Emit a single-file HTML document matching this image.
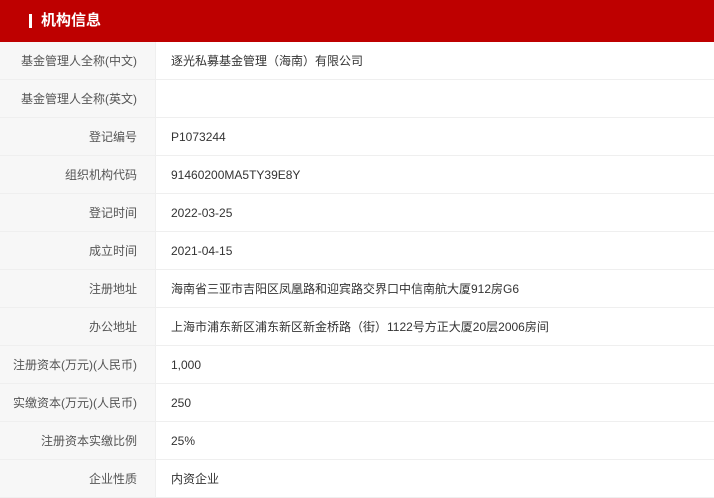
<!DOCTYPE html>
<html><head><meta charset="utf-8"><style>
body{margin:0;width:714px;height:497px;overflow:hidden;background:#fff;font-family:"Liberation Sans","Noto Sans CJK SC",sans-serif;}
.h{height:42px;background:#be0000;color:#fff;font-size:15px;font-weight:bold;line-height:42px;padding-left:29px;position:relative;box-sizing:border-box}
.h:before{content:"";position:absolute;left:29px;top:14px;width:3px;height:14px;background:#fff}
.h span{margin-left:12px}
table{border-collapse:collapse;width:714px}
td{height:37px;border-bottom:1px solid #efefef;font-size:12px;padding:0}
td.l{width:137px;padding-right:18px;text-align:right;background:#f7f7f7;color:#555;border-right:1px solid #efefef}
td.v{padding-left:15px;color:#333}
</style></head><body>
<div class="h"><span>机构信息</span></div>
<table>
<tr><td class="l">基金管理人全称(中文)</td><td class="v">逐光私募基金管理（海南）有限公司</td></tr>
<tr><td class="l">基金管理人全称(英文)</td><td class="v"></td></tr>
<tr><td class="l">登记编号</td><td class="v">P1073244</td></tr>
<tr><td class="l">组织机构代码</td><td class="v">91460200MA5TY39E8Y</td></tr>
<tr><td class="l">登记时间</td><td class="v">2022-03-25</td></tr>
<tr><td class="l">成立时间</td><td class="v">2021-04-15</td></tr>
<tr><td class="l">注册地址</td><td class="v">海南省三亚市吉阳区凤凰路和迎宾路交界口中信南航大厦912房G6</td></tr>
<tr><td class="l">办公地址</td><td class="v">上海市浦东新区浦东新区新金桥路（街）1122号方正大厦20层2006房间</td></tr>
<tr><td class="l">注册资本(万元)(人民币)</td><td class="v">1,000</td></tr>
<tr><td class="l">实缴资本(万元)(人民币)</td><td class="v">250</td></tr>
<tr><td class="l">注册资本实缴比例</td><td class="v">25%</td></tr>
<tr><td class="l">企业性质</td><td class="v">内资企业</td></tr>
</table>
</body></html>
